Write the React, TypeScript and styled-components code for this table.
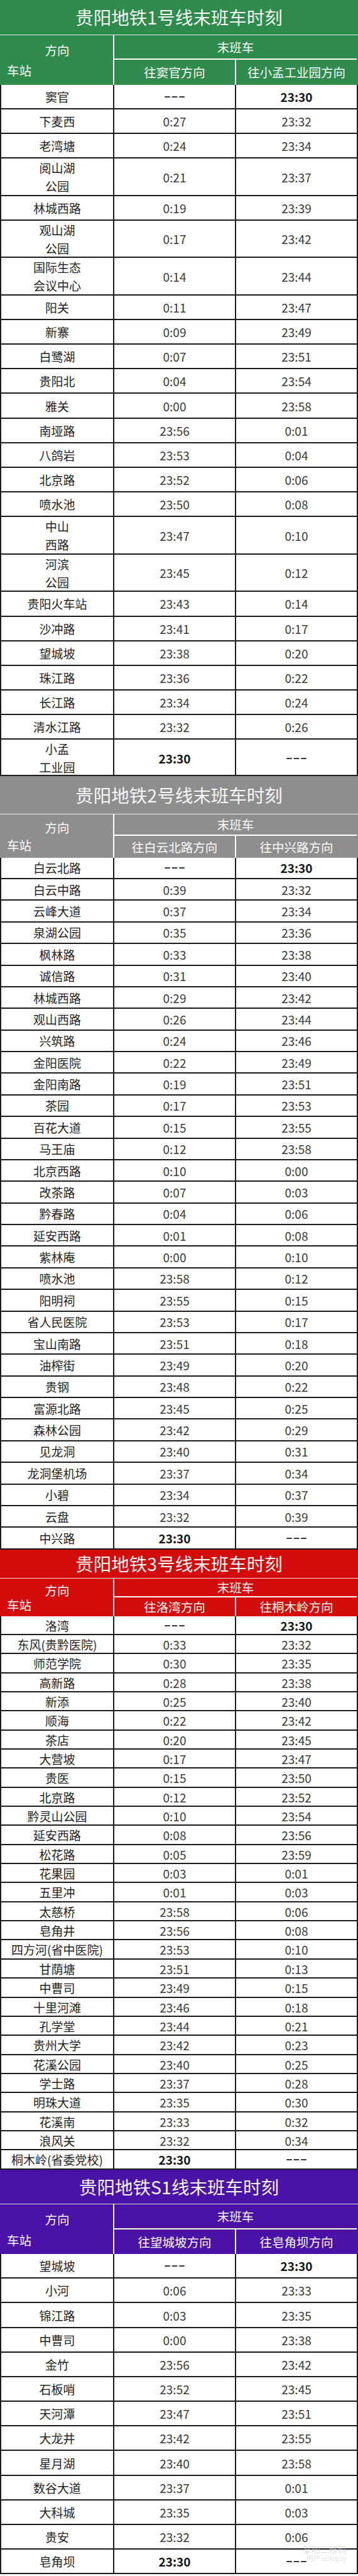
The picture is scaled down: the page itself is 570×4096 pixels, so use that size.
import React from 'react';
import styled, { createGlobalStyle } from 'styled-components';

const GlobalStyle = createGlobalStyle`
  html, body { margin: 0; padding: 0; background: #fff; }
  body {
    font-family: "Noto Sans CJK SC", "Noto Sans", sans-serif;
    -webkit-font-smoothing: antialiased;
  }
  * { box-sizing: border-box; }
`;

const COLS = '180px 194px 1fr';
const LINE = '#1c1c1c';

type StationRow = { name: string[]; a: string; b: string; h?: number };

type Line = {
  title: string;
  bg: string;
  titleH: number;
  r1: number;
  r2: number;
  rowH: number;
  doubleH: number;
  dirA: string;
  dirB: string;
  rows: StationRow[];
  mark?: boolean;
};

const r = (name: string, a: string, b: string, h?: number): StationRow => ({
  name: name.split('|'),
  a,
  b,
  h,
});

const LINES: Line[] = [
  {
    title: '贵阳地铁1号线末班车时刻',
    bg: '#2e8b4c',
    titleH: 56.3,
    r1: 38.6,
    r2: 39.7,
    rowH: 39.17,
    doubleH: 59.55,
    dirA: '往窦官方向',
    dirB: '往小孟工业园方向',
    rows: [
      r('窦官', '---', '23:30'),
      r('下麦西', '0:27', '23:32'),
      r('老湾塘', '0:24', '23:34'),
      r('阅山湖|公园', '0:21', '23:37'),
      r('林城西路', '0:19', '23:39'),
      r('观山湖|公园', '0:17', '23:42'),
      r('国际生态|会议中心', '0:14', '23:44'),
      r('阳关', '0:11', '23:47'),
      r('新寨', '0:09', '23:49'),
      r('白鹭湖', '0:07', '23:51'),
      r('贵阳北', '0:04', '23:54'),
      r('雅关', '0:00', '23:58'),
      r('南垭路', '23:56', '0:01'),
      r('八鸽岩', '23:53', '0:04'),
      r('北京路', '23:52', '0:06'),
      r('喷水池', '23:50', '0:08'),
      r('中山|西路', '23:47', '0:10'),
      r('河滨|公园', '23:45', '0:12'),
      r('贵阳火车站', '23:43', '0:14'),
      r('沙冲路', '23:41', '0:17'),
      r('望城坡', '23:38', '0:20'),
      r('珠江路', '23:36', '0:22'),
      r('长江路', '23:34', '0:24'),
      r('清水江路', '23:32', '0:26'),
      r('小孟|工业园', '23:30', '---', 57.6),
    ],
  },
  {
    title: '贵阳地铁2号线末班车时刻',
    bg: '#8e8e8e',
    titleH: 60.8,
    r1: 34.2,
    r2: 34.8,
    rowH: 34.38,
    doubleH: 60,
    dirA: '往白云北路方向',
    dirB: '往中兴路方向',
    rows: [
      r('白云北路', '---', '23:30'),
      r('白云中路', '0:39', '23:32'),
      r('云峰大道', '0:37', '23:34'),
      r('泉湖公园', '0:35', '23:36'),
      r('枫林路', '0:33', '23:38'),
      r('诚信路', '0:31', '23:40'),
      r('林城西路', '0:29', '23:42'),
      r('观山西路', '0:26', '23:44'),
      r('兴筑路', '0:24', '23:46'),
      r('金阳医院', '0:22', '23:49'),
      r('金阳南路', '0:19', '23:51'),
      r('茶园', '0:17', '23:53'),
      r('百花大道', '0:15', '23:55'),
      r('马王庙', '0:12', '23:58'),
      r('北京西路', '0:10', '0:00'),
      r('改茶路', '0:07', '0:03'),
      r('黔春路', '0:04', '0:06'),
      r('延安西路', '0:01', '0:08'),
      r('紫林庵', '0:00', '0:10'),
      r('喷水池', '23:58', '0:12'),
      r('阳明祠', '23:55', '0:15'),
      r('省人民医院', '23:53', '0:17'),
      r('宝山南路', '23:51', '0:18'),
      r('油榨街', '23:49', '0:20'),
      r('贵钢', '23:48', '0:22'),
      r('富源北路', '23:45', '0:25'),
      r('森林公园', '23:42', '0:29'),
      r('见龙洞', '23:40', '0:31'),
      r('龙洞堡机场', '23:37', '0:34'),
      r('小碧', '23:34', '0:37'),
      r('云盘', '23:32', '0:39'),
      r('中兴路', '23:30', '---'),
    ],
  },
  {
    title: '贵阳地铁3号线末班车时刻',
    bg: '#d30c0c',
    titleH: 45.9,
    r1: 30,
    r2: 30.1,
    rowH: 30.35,
    doubleH: 56,
    dirA: '往洛湾方向',
    dirB: '往桐木岭方向',
    rows: [
      r('洛湾', '---', '23:30'),
      r('东风(贵黔医院)', '0:33', '23:32'),
      r('师范学院', '0:30', '23:35'),
      r('高新路', '0:28', '23:38'),
      r('新添', '0:25', '23:40'),
      r('顺海', '0:22', '23:42'),
      r('茶店', '0:20', '23:45'),
      r('大营坡', '0:17', '23:47'),
      r('贵医', '0:15', '23:50'),
      r('北京路', '0:12', '23:52'),
      r('黔灵山公园', '0:10', '23:54'),
      r('延安西路', '0:08', '23:56'),
      r('松花路', '0:05', '23:59'),
      r('花果园', '0:03', '0:01'),
      r('五里冲', '0:01', '0:03'),
      r('太慈桥', '23:58', '0:06'),
      r('皂角井', '23:56', '0:08'),
      r('四方河(省中医院)', '23:53', '0:10'),
      r('甘荫塘', '23:51', '0:13'),
      r('中曹司', '23:49', '0:15'),
      r('十里河滩', '23:46', '0:18'),
      r('孔学堂', '23:44', '0:21'),
      r('贵州大学', '23:42', '0:23'),
      r('花溪公园', '23:40', '0:25'),
      r('学士路', '23:37', '0:28'),
      r('明珠大道', '23:35', '0:30'),
      r('花溪南', '23:33', '0:32'),
      r('浪风关', '23:32', '0:34'),
      r('桐木岭(省委党校)', '23:30', '---'),
    ],
  },
  {
    title: '贵阳地铁S1线末班车时刻',
    bg: '#4a12a7',
    titleH: 55.4,
    r1: 39.5,
    r2: 39.6,
    rowH: 39.18,
    doubleH: 60,
    dirA: '往望城坡方向',
    dirB: '往皂角坝方向',
    mark: true,
    rows: [
      r('望城坡', '---', '23:30'),
      r('小河', '0:06', '23:33'),
      r('锦江路', '0:03', '23:35'),
      r('中曹司', '0:00', '23:38'),
      r('金竹', '23:56', '23:42'),
      r('石板哨', '23:52', '23:45'),
      r('天河潭', '23:47', '23:51'),
      r('大龙井', '23:42', '23:55'),
      r('星月湖', '23:40', '23:58'),
      r('数谷大道', '23:37', '0:01'),
      r('大科城', '23:35', '0:03'),
      r('贵安', '23:32', '0:06'),
      r('皂角坝', '23:30', '---'),
    ],
  },
];

const Page = styled.main`
  width: 570px;
  display: flex;
  flex-direction: column;
`;

const Section = styled.section`
  display: flex;
  flex-direction: column;
  position: relative;
`;

const Title = styled.h1<{ $bg: string; $h: number }>`
  margin: 0;
  height: ${(p) => p.$h}px;
  background: ${(p) => p.$bg};
  color: #f7f7f7;
  display: flex;
  align-items: center;
  justify-content: center;
  font-size: 28.5px;
  font-weight: 400;
  line-height: 1;
  border-bottom: 1.5px solid rgba(255, 255, 255, 0.85);
`;

const Header = styled.div<{ $bg: string; $r1: number; $r2: number }>`
  display: grid;
  grid-template-columns: ${COLS};
  grid-template-rows: ${(p) => p.$r1}px ${(p) => p.$r2}px;
  background: ${(p) => p.$bg};
  color: #fbfbfb;
  font-size: 19.5px;
  line-height: 1;
  border-left: 2px solid transparent;
  border-right: 2px solid transparent;
`;

const Corner = styled.div<{ $r1: number; $r2: number }>`
  grid-row: 1 / span 2;
  grid-column: 1;
  display: grid;
  grid-template-rows: ${(p) => p.$r1}px ${(p) => p.$r2}px;
  border-right: 2px solid #fff;
`;

const CornerDir = styled.span`
  align-self: center;
  justify-self: center;
  transform: translateY(4px);
`;

const CornerStation = styled.span`
  align-self: center;
  justify-self: start;
  padding-left: 9px;
  transform: translateY(-3px);
`;

const LastTrain = styled.div`
  grid-row: 1;
  grid-column: 2 / span 2;
  display: flex;
  align-items: center;
  justify-content: center;
  border-bottom: 2px solid #fff;
`;

const Direction = styled.div<{ $first?: boolean }>`
  grid-row: 2;
  display: flex;
  align-items: center;
  justify-content: center;
  border-right: ${(p) => (p.$first ? '2px solid #fff' : 'none')};
`;

const Row = styled.div<{ $h: number }>`
  display: grid;
  grid-template-columns: ${COLS};
  height: ${(p) => p.$h}px;
  background: #fff;
  border-left: 2px solid ${LINE};
  border-right: 2px solid ${LINE};
  border-bottom: 2px solid ${LINE};
`;

const Cell = styled.div`
  display: flex;
  flex-direction: column;
  align-items: center;
  justify-content: center;
  &:not(:last-child) {
    border-right: 2px solid ${LINE};
  }
`;

const StationName = styled.span`
  font-size: 19px;
  line-height: 29px;
  color: #1f1f1f;
  white-space: nowrap;
`;

const Time = styled.span<{ $bold?: boolean }>`
  font-size: 19px;
  line-height: 1;
  color: ${(p) => (p.$bold ? '#111' : '#3a3a3a')};
  font-weight: ${(p) => (p.$bold ? 700 : 400)};
`;

const Dash = styled.span`
  font-family: "Liberation Sans", sans-serif;
  font-size: 17px;
  line-height: 1;
  font-weight: 700;
  color: #222;
  letter-spacing: 2px;
  padding-left: 2px;
`;

const Watermark = styled.div`
  position: absolute;
  right: 18px;
  bottom: 20px;
  display: flex;
  flex-direction: column;
  align-items: flex-end;
  gap: 2px;
  color: rgba(205, 205, 205, 0.6);
  font-size: 14px;
  line-height: 1;
  pointer-events: none;
  & small {
    font-size: 11px;
  }
`;

const TimeValue: React.FC<{ v: string }> = ({ v }) =>
  v === '---' ? <Dash>–––</Dash> : <Time $bold={v === '23:30'}>{v}</Time>;

const LineTable: React.FC<{ line: Line }> = ({ line }) => (
  <Section>
    <Title $bg={line.bg} $h={line.titleH}>
      {line.title}
    </Title>
    <Header $bg={line.bg} $r1={line.r1} $r2={line.r2}>
      <Corner $r1={line.r1} $r2={line.r2}>
        <CornerDir>方向</CornerDir>
        <CornerStation>车站</CornerStation>
      </Corner>
      <LastTrain>末班车</LastTrain>
      <Direction $first>{line.dirA}</Direction>
      <Direction>{line.dirB}</Direction>
    </Header>
    {line.rows.map((row, i) => (
      <Row
        key={i}
        $h={row.h ?? (row.name.length > 1 ? line.doubleH : line.rowH)}
      >
        <Cell>
          {row.name.map((n) => (
            <StationName key={n}>{n}</StationName>
          ))}
        </Cell>
        <Cell>
          <TimeValue v={row.a} />
        </Cell>
        <Cell>
          <TimeValue v={row.b} />
        </Cell>
      </Row>
    ))}
    {line.mark && (
      <Watermark>
        <span>掌啪二维码</span>
        <small>用户 uclvguy</small>
      </Watermark>
    )}
  </Section>
);

export default function App() {
  return (
    <>
      <GlobalStyle />
      <Page>
        {LINES.map((line) => (
          <LineTable key={line.title} line={line} />
        ))}
      </Page>
    </>
  );
}
